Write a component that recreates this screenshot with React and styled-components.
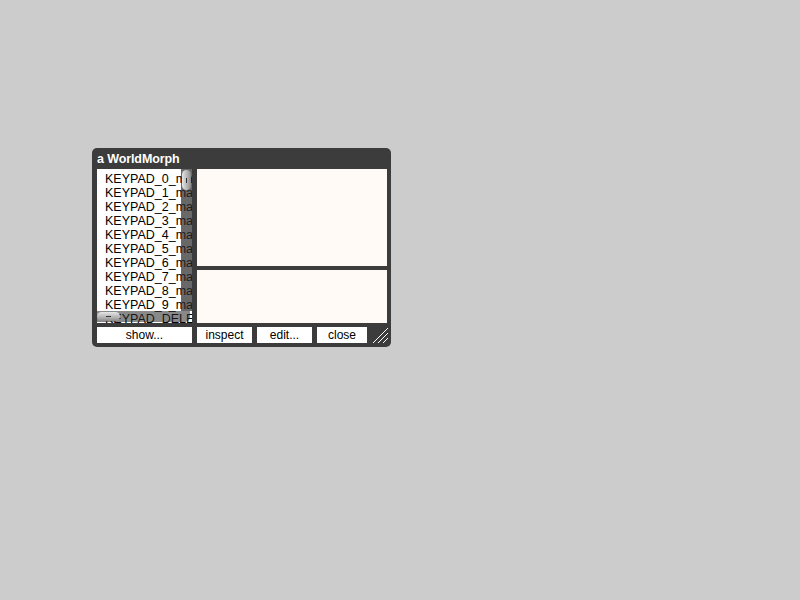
import React from 'react'
import styled, { createGlobalStyle } from 'styled-components'

const Global = createGlobalStyle`
  html, body {
    margin: 0;
    background: #cccccc;
    font-family: 'Liberation Sans', Arial, sans-serif;
  }
`

const Page = styled.div`
  width: 800px;
  height: 600px;
  padding: 148px 0 0 92px;
  box-sizing: border-box;
`

const Window = styled.div`
  width: 299px;
  height: 199px;
  background: #3c3c3c;
  border-radius: 5px;
  box-sizing: border-box;
  padding: 0 4px 4px 5px;
  display: flex;
  flex-direction: column;
`

const Title = styled.div`
  height: 21px;
  line-height: 23px;
  color: #fff;
  font-weight: bold;
  font-size: 12.5px;
  letter-spacing: -0.1px;
`

const Body = styled.div`
  display: flex;
  gap: 5px;
  height: 154px;
`

const ListBox = styled.div`
  position: relative;
  width: 95px;
  flex-shrink: 0;
  background: #fff;
  overflow: hidden;
`

const Items = styled.div`
  padding: 3px 0 0 8px;
`

const Item = styled.div`
  height: 14px;
  line-height: 14px;
  font-size: 12.5px;
  color: #000;
  white-space: nowrap;
`

const VBar = styled.div`
  position: absolute;
  top: 0;
  right: 0;
  width: 11px;
  bottom: 12px;
  background: rgba(40, 40, 40, 0.7);
`

const HBar = styled.div`
  position: absolute;
  left: 0;
  right: 2px;
  bottom: 1px;
  height: 11px;
  background: rgba(40, 40, 40, 0.55);
  border-radius: 0 0 5px 0;
`

const Thumb = styled.div`
  position: absolute;
  border-radius: 5px;
  background: linear-gradient(${p => (p.$vertical ? '90deg' : '180deg')}, #e6e6e6, #a9a9a9 70%, #8a8a8a);
  display: flex;
  align-items: center;
  justify-content: center;
  ${p => p.$vertical
    ? 'top: 1px; right: 1px; width: 9px; height: 20px;'
    : 'left: 0; bottom: 1px; width: 23px; height: 9px;'}

  &::after {
    content: '';
    background: #333;
    ${p => (p.$vertical ? 'width: 1px; height: 5px;' : 'width: 5px; height: 1px;')}
  }
`

const Panes = styled.div`
  flex: 1;
  display: flex;
  flex-direction: column;
  gap: 4px;
`

const Pane = styled.div`
  background: #fffaf5;
  height: ${p => p.$h}px;
`

const Buttons = styled.div`
  display: flex;
  align-items: center;
  gap: 5px;
  margin-top: 4px;
  height: 16px;
`

const Button = styled.div`
  width: ${p => p.$w}px;
  flex-shrink: 0;
  height: 16px;
  background: #fff;
  color: #000;
  font-size: 12px;
  line-height: 16px;
  text-align: center;
`

const Grip = styled.svg`
  flex-shrink: 0;
  margin-top: 1px;
  display: block;
`

const keys = ['0', '1', '2', '3', '4', '5', '6', '7', '8', '9']

export default function App() {
  return (
    <>
      <Global />
      <Page>
        <Window>
          <Title>a WorldMorph</Title>
          <Body>
            <ListBox>
              <Items>
                {keys.map(k => (
                  <Item key={k}>KEYPAD_{k}_mapping</Item>
                ))}
                <Item>KEYPAD_DELETE_mapping</Item>
              </Items>
              <VBar>
                <Thumb $vertical />
              </VBar>
              <HBar>
                <Thumb />
              </HBar>
            </ListBox>
            <Panes>
              <Pane $h={97} />
              <Pane $h={53} />
            </Panes>
          </Body>
          <Buttons>
            <Button $w={95}>show...</Button>
            <Button $w={55}>inspect</Button>
            <Button $w={55}>edit...</Button>
            <Button $w={50}>close</Button>
            <Grip width="17" height="17" viewBox="0 0 17 17">
              <g stroke="#ffffff" strokeWidth="1">
                <line x1="1" y1="16" x2="16" y2="1" />
                <line x1="6" y1="16" x2="16" y2="6" />
                <line x1="11" y1="16" x2="16" y2="11" />
              </g>
            </Grip>
          </Buttons>
        </Window>
      </Page>
    </>
  )
}
